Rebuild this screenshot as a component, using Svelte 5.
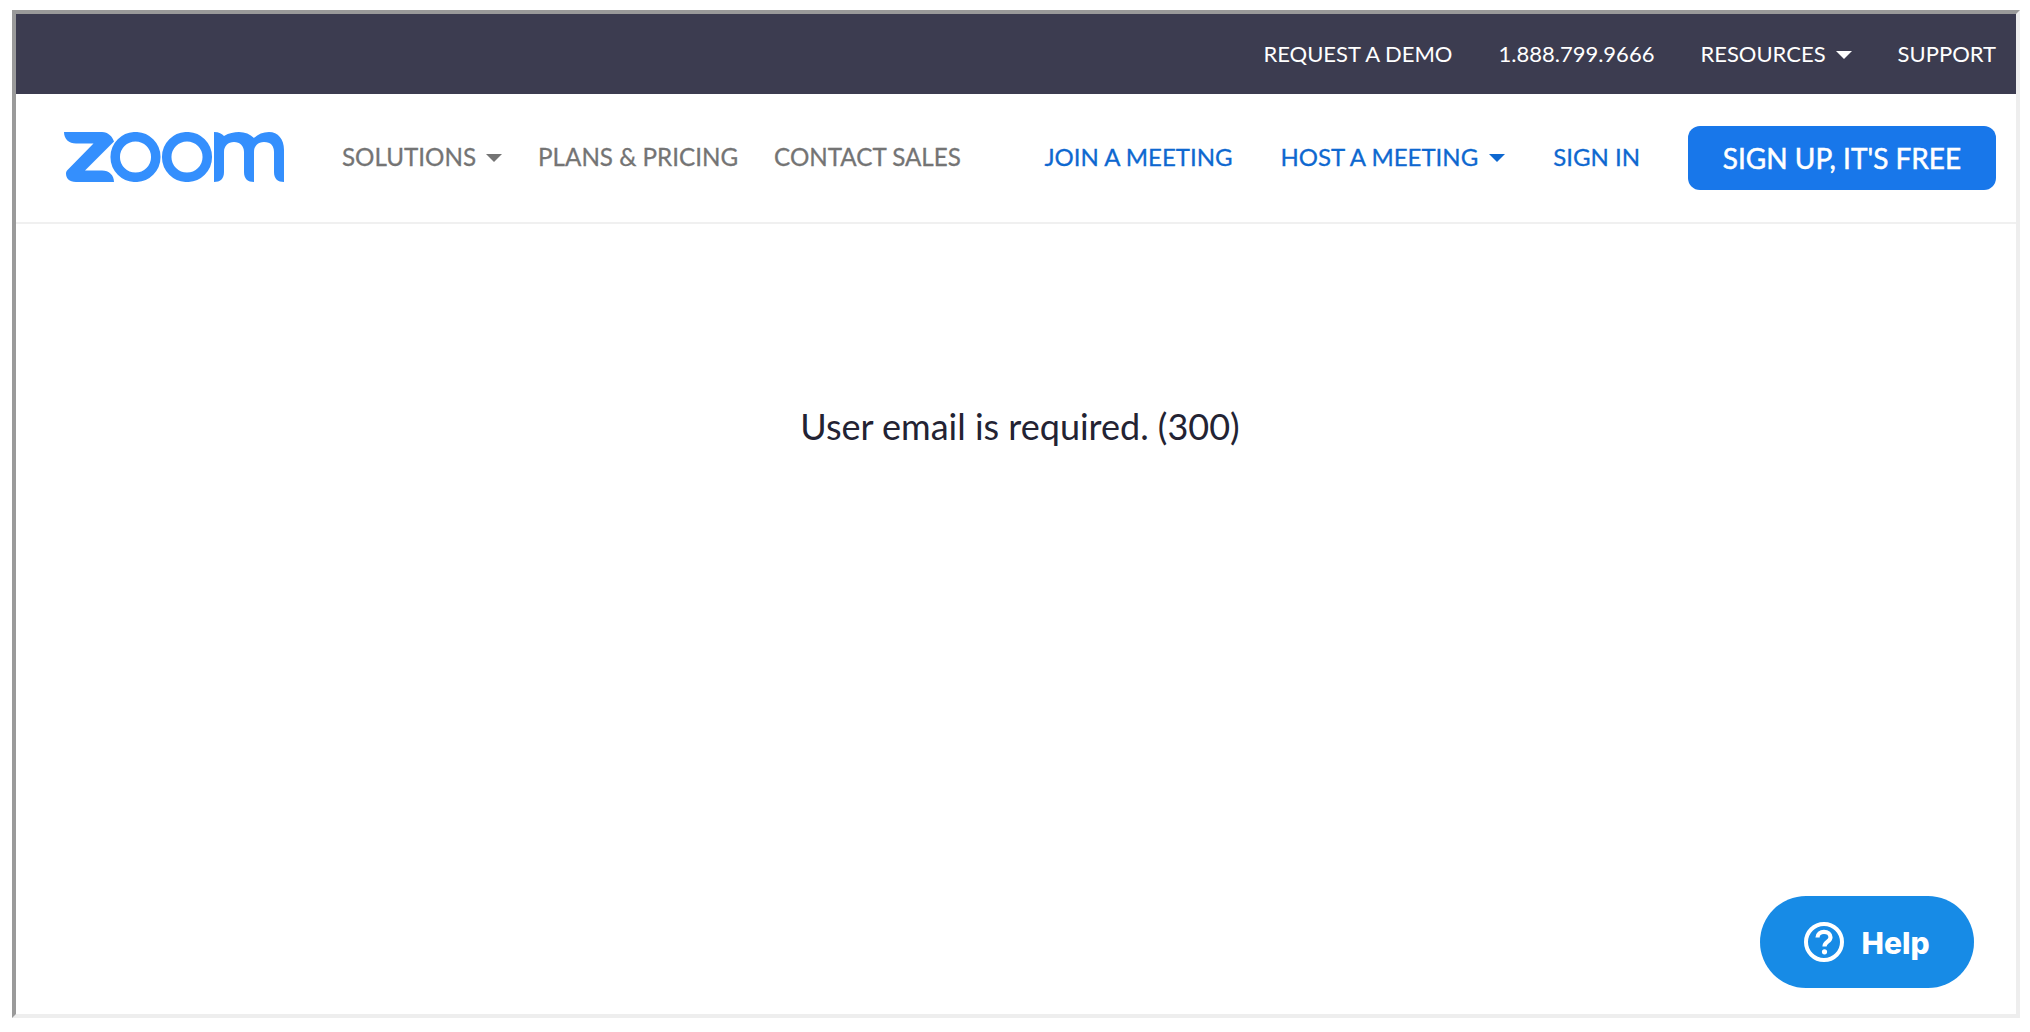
<script>
  const top = ['REQUEST A DEMO', '1.888.799.9666'];
</script>

<div class="frame">
  <div class="topbar">
    {#each top as t}<a href="#x">{t}</a>{/each}
    <a href="#x" class="caret-item">RESOURCES <i class="caret"></i></a>
    <a href="#x">SUPPORT</a>
  </div>
  <header class="nav">
    <svg class="logo" width="220" height="50" viewBox="0 0 220 50" aria-label="zoom">
      <path fill="#348ffd" d="M0 0H38C44 0 48.500 4.500 50 9.500L21 38.500H38C45 38.500 50 43 50 50H12C5 50 2 46 2 41.500C2 40 2.500 39 4 37.500L29.500 11.500H12C5 11.500 0 7 0 0Z"/>
      <circle cx="71.500" cy="25" r="20.300" fill="none" stroke="#348ffd" stroke-width="9.500"/>
      <circle cx="123" cy="25" r="20.300" fill="none" stroke="#348ffd" stroke-width="9.500"/>
      <path fill="#348ffd" d="M150 0C155 0 158 2 160 4C165 1 170 0 175 0C181 0 186 2 190 6C194 2 199 0 205 0C214 0 220 7 220 18V50C214 50 210 47 210 40V20C210 14 207 10 200 10C194 10 190 14 190 20V50C184 50 180 47 180 40V20C180 14 176 10 170 10C164 10 160 14 160 20V40C160 47 156 50 150 50Z"/>
    </svg>
    <nav class="left">
      <a href="#x" class="caret-item">SOLUTIONS <i class="caret"></i></a>
      <a href="#x">PLANS &amp; PRICING</a>
      <a href="#x">CONTACT SALES</a>
    </nav>
    <nav class="right">
      <a href="#x">JOIN A MEETING</a>
      <a href="#x" class="caret-item">HOST A MEETING <i class="caret"></i></a>
      <a href="#x">SIGN IN</a>
      <a href="#x" class="signup">SIGN UP, IT'S FREE</a>
    </nav>
  </header>
  <main class="content">
    <p>User email is required. (300)</p>
  </main>
  <button class="help">
    <svg width="40" height="40" viewBox="0 0 40 40" aria-hidden="true">
      <circle cx="20" cy="20" r="18" fill="none" stroke="#fff" stroke-width="4"/>
      <path d="M13.500 15.500C13.500 11.800 16.500 9.800 20 9.800C23.700 9.800 26.500 12 26.500 15.300C26.500 19.800 20.500 19.600 20.500 24.500" fill="none" stroke="#fff" stroke-width="4.200"/>
      <circle cx="20.500" cy="29.800" r="2.600" fill="#fff"/>
    </svg>
    <span>Help</span>
  </button>
</div>

<style>
  :global(body) { margin: 0; background: #fff; }
  .frame {
    position: relative;
    box-sizing: border-box;
    width: 2008px;
    height: 1008px;
    margin: 10px 0 0 12px;
    border: 4px solid;
    border-color: #9a9a9a #eee #eee #9a9a9a;
    font-family: Lato, sans-serif;
    display: flex;
    flex-direction: column;
  }
  a { text-decoration: none; color: inherit; white-space: nowrap; }
  .topbar {
    height: 80px;
    background: #3c3c50;
    color: #fff;
    display: flex;
    align-items: center;
    justify-content: flex-end;
    gap: 46px;
    padding: 0 20px 2px 0;
    box-sizing: border-box;
    font-size: 22px;
  }
  .caret-item { display: inline-flex; align-items: center; gap: 10px; }
  .caret {
    width: 0; height: 0;
    margin-top: 3px;
    border-left: 8px solid transparent;
    border-right: 8px solid transparent;
    border-top: 8px solid currentColor;
  }
  .nav {
    height: 130px;
    box-sizing: border-box;
    border-bottom: 2px solid #f0f0f0;
    display: flex;
    align-items: center;
    font-size: 24.2px;
    padding-right: 20px;
  }
  .logo { margin: 0 0 2px 48px; flex: none; }
  .left {
    margin-left: 58px;
    display: flex;
    align-items: center;
    gap: 36px;
    color: #747474;
    -webkit-text-stroke: 0.3px currentColor;
    padding-bottom: 4px;
  }
  .right {
    margin-left: auto;
    display: flex;
    align-items: center;
    gap: 48px;
    color: #0e68d0;
    font-size: 24px;
  }
  .right .caret-item { gap: 11px; }
  .right > a:not(.signup) {
    -webkit-text-stroke: 0.3px currentColor;
    padding-bottom: 4px;
  }
  .signup {
    box-sizing: border-box;
    width: 308px;
    height: 64px;
    padding-bottom: 1px;
    border-radius: 12px;
    background: #1877ea;
    color: #fff;
    font-size: 28px;
    -webkit-text-stroke: 0.5px currentColor;
    display: flex;
    align-items: center;
    justify-content: center;
  }
  .content {
    flex: 1;
    display: flex;
    justify-content: center;
    padding-left: 8px;
  }
  p {
    margin: 181px 0 0;
    font-size: 36px;
    line-height: 42px;
    color: #232333;
    height: 42px;
  }
  .help {
    position: absolute;
    left: 1744px;
    top: 882px;
    width: 214px;
    height: 92px;
    border: 0;
    border-radius: 46px;
    background: #178be6;
    color: #fff;
    display: flex;
    align-items: center;
    justify-content: center;
    gap: 17px;
    padding: 0;
    font-family: Inter, sans-serif;
    font-weight: 800;
    font-size: 30px;
  }
  .help span { position: relative; top: 1px; }
</style>
